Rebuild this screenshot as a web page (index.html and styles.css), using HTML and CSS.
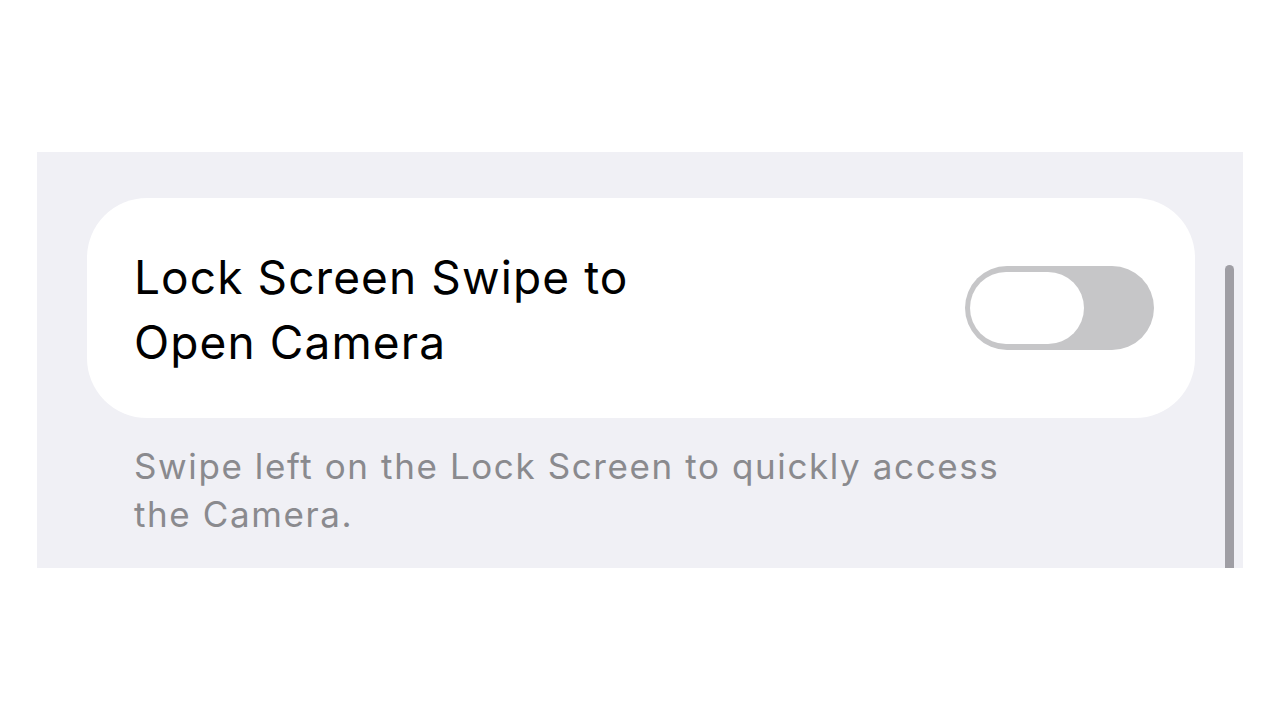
FILE: index.html
```html
<!DOCTYPE html>
<html lang="en">
<head>
    <meta charset="UTF-8">
    <meta name="viewport" content="width=device-width, initial-scale=1.0">
    <title>Lock Screen Swipe to Open Camera</title>
    <link rel="stylesheet" href="styles.css">
</head>
<body>
    <div class="panel">
        <!-- Ajuste de cámara -->
        <div class="setting-card">
            <div class="setting-title">Lock Screen Swipe to<br>Open Camera</div>
            <div class="toggle">
                <div class="toggle-knob"></div>
            </div>
        </div>

        <p class="setting-note">Swipe left on the Lock Screen to quickly access<br>the Camera.</p>

        <div class="scrollbar"></div>
    </div>
</body>
</html>
```

FILE: styles.css
```css
:root {
    --fondo-grupo: #f0f0f5;
    --blanco: #ffffff;
    --texto: #000000;
    --texto-suave: #8a8a8e;
    --gris-toggle: #c6c6c8;
    --barra: #9f9ea4;
}

body {
    margin: 0;
    padding: 0;
    background-color: var(--blanco);
    font-family: 'Inter', 'Noto Sans', sans-serif;
}

.panel {
    position: relative;
    margin: 152px 0 0 37px;
    width: 1206px;
    height: 416px;
    box-sizing: border-box;
    padding: 46px 48px 0 50px;
    background-color: var(--fondo-grupo);
}

.setting-card {
    display: flex;
    align-items: center;
    justify-content: space-between;
    height: 220px;
    box-sizing: border-box;
    padding: 0 41px 0 47px;
    background: var(--blanco);
    border-radius: 60px;
}

.setting-title {
    margin-top: 4px;
    font-size: 46px;
    line-height: 65px;
    color: var(--texto);
    letter-spacing: 1.1px;
}

.toggle {
    width: 189px;
    height: 84px;
    box-sizing: border-box;
    padding: 6px 70px 6px 5px;
    border-radius: 42px;
    background-color: var(--gris-toggle);
}

.toggle-knob {
    height: 100%;
    border-radius: 36px;
    background-color: var(--blanco);
}

.setting-note {
    margin: 24px 0 0 47px;
    font-size: 35px;
    line-height: 48px;
    color: var(--texto-suave);
    letter-spacing: 1.6px;
}

/* Barra de desplazamiento superpuesta */
.scrollbar {
    position: absolute;
    top: 113px;
    bottom: 0;
    right: 9px;
    width: 9px;
    border-radius: 5px 5px 0 0;
    background-color: var(--barra);
}
```
